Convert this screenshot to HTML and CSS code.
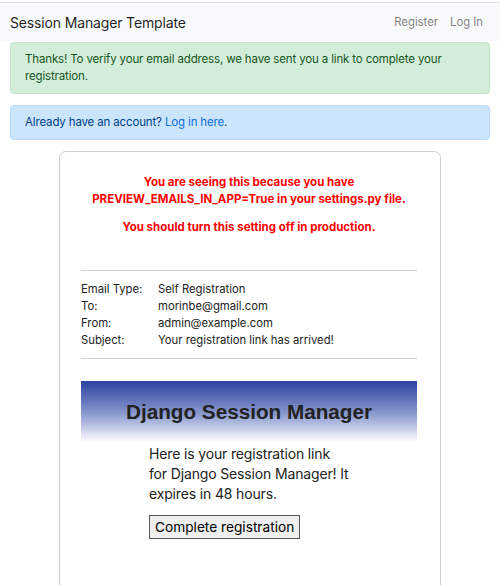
FILE: index.html
```html
<!DOCTYPE html>
<html>
<head>
<meta charset="utf-8">
<link rel="stylesheet" href="styles.css">
</head>
<body>
<nav class="navbar">
  <span class="brand">Session Manager Template</span>
  <div class="nav-links">
    <a class="nav-link" href="#">Register</a>
    <a class="nav-link" href="#">Log In</a>
  </div>
</nav>
<main class="container">
  <div class="alert alert-success">Thanks! To verify your email address, we have sent you a link to complete your registration.</div>
  <div class="alert alert-info">Already have an account? <a class="alert-link" href="#">Log in here</a>.</div>
  <div class="card">
    <p class="warn">You are seeing this because you have<br>PREVIEW_EMAILS_IN_APP=True in your settings.py file.</p>
    <p class="warn">You should turn this setting off in production.</p>
    <hr class="rule rule-top">
    <div class="meta">
      <span>Email Type:</span><span>Self Registration</span>
      <span>To:</span><span>morinbe@gmail.com</span>
      <span>From:</span><span>admin@example.com</span>
      <span>Subject:</span><span>Your registration link has arrived!</span>
    </div>
    <hr class="rule rule-bottom">
    <div class="email">
      <div class="email-header">Django Session Manager</div>
      <div class="email-body">
        <p class="email-text">Here is your registration link for Django Session Manager! It expires in 48 hours.</p>
        <button class="email-button">Complete registration</button>
      </div>
    </div>
  </div>
</main>
</body>
</html>
```
FILE: styles.css
```css
html, body {
  margin: 0;
  padding: 0;
  background: #ffffff;
}
body {
  padding-top: 2px;
  font-family: Inter, "Noto Sans", sans-serif;
  color: #212529;
}
.navbar {
  display: flex;
  align-items: center;
  justify-content: space-between;
  height: 38px;
  border-top: 1px solid #dfe1e4;
  background: #f8f9fa;
  padding: 0 17px 0 10px;
}
.brand {
  font-size: 14px;
  color: rgba(0,0,0,.88);
  letter-spacing: -0.15px;
}
.nav-links {
  display: flex;
  gap: 12px;
}
.nav-link {
  font-size: 11.3px;
  color: rgba(0,0,0,.5);
  text-decoration: none;
}
.container {
  padding: 1px 10px 0 10px;
}
.alert {
  border: 1px solid transparent;
  border-radius: 4px;
  padding: 8px 14px;
  font-size: 11.5px;
  letter-spacing: -0.15px;
  line-height: 17px;
  margin-bottom: 11px;
}
.alert-success {
  background: #d4edda;
  border-color: #c3e6cb;
  color: #155724;
}
.alert-info {
  background: #cce5ff;
  border-color: #b8daff;
  color: #004085;
}
.alert-link {
  color: #0a6fd8;
  text-decoration: none;
}
.card {
  width: 336px;
  margin-left: 49px;
  padding: 22px 23px 80px 21px;
  border: 1px solid #cfcfcf;
  border-radius: 7px;
}
.warn {
  margin: 0 0 11px 0;
  text-align: center;
  color: #ff0000;
  font-weight: 700;
  font-size: 11.5px;
  line-height: 17px;
}
.rule {
  border: 0;
  border-top: 1px solid #d0d0d0;
  margin: 0;
}
.rule-top {
  margin-top: 34px;
  margin-bottom: 10px;
}
.rule-bottom {
  margin-top: 9px;
  margin-bottom: 22px;
}
.meta {
  display: grid;
  grid-template-columns: 77px 1fr;
  font-size: 11.3px;
  line-height: 17px;
  color: #222;
}
.email-header {
  height: 61px;
  display: flex;
  align-items: center;
  justify-content: center;
  background: linear-gradient(to bottom, #2c409e 0%, #8d9bd0 55%, #ffffff 100%);
  font-family: "Liberation Sans", Arial, sans-serif;
  font-weight: 700;
  font-size: 20.7px;
  color: #222;
}
.email-body {
  width: 200px;
  margin: 0 auto;
}
.email-text {
  margin: 2px 0 11px 0;
  font-size: 14px;
  letter-spacing: -0.15px;
  line-height: 20px;
  color: #222;
}
.email-button {
  font-family: Inter, "Noto Sans", sans-serif;
  font-size: 13.7px;
  padding: 2px 5px;
  height: 24px;
  background: #efefef;
  border: 1px solid #555;
  border-radius: 0;
  color: #000;
}
```
